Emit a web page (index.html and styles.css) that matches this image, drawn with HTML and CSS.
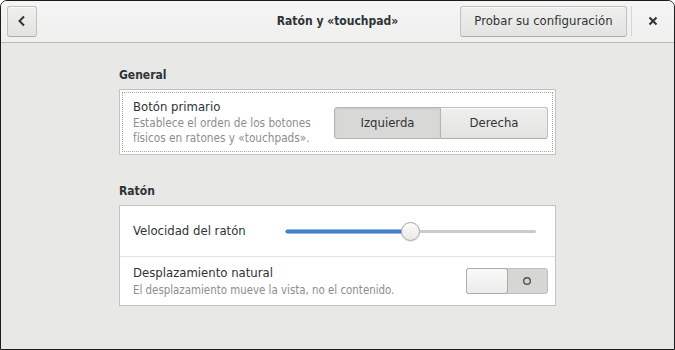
FILE: index.html
```html
<!doctype html>
<html lang="es">
<head>
<meta charset="utf-8" />
<title>Ratón y «touchpad»</title>
<link rel="stylesheet" href="styles.css">
</head>
<body>
  <div class="window">
    <!-- barra de título -->
    <header class="headerbar">
      <div class="hb-start">
        <button class="btn back" aria-label="Atrás">
          <svg width="10" height="12" viewBox="0 0 10 12"><path d="M7 1.5 L2.5 6 L7 10.5" fill="none" stroke="#2e3436" stroke-width="2"/></svg>
        </button>
      </div>
      <div class="title">Ratón y «touchpad»</div>
      <div class="hb-end">
        <button class="btn test">Probar su configuración</button>
        <span class="sep"></span>
        <button class="close" aria-label="Cerrar">
          <svg width="10" height="10" viewBox="0 0 10 10"><path d="M1.5 1.5 L8.5 8.5 M8.5 1.5 L1.5 8.5" stroke="#2e3436" stroke-width="2"/></svg>
        </button>
      </div>
    </header>

    <main class="content">
      <section class="section">
        <h2>General</h2>
        <div class="frame">
          <div class="row focus">
            <div class="info">
              <div class="label">Botón primario</div>
              <div class="desc">Establece el orden de los botones<br>físicos en ratones y «touchpads».</div>
            </div>
            <div class="linked">
              <button class="btn active">Izquierda</button>
              <button class="btn">Derecha</button>
            </div>
          </div>
        </div>
      </section>

      <section class="section">
        <h2>Ratón</h2>
        <div class="frame">
          <div class="row single">
            <div class="info"><div class="label">Velocidad del ratón</div></div>
            <div class="scale">
              <span class="fill"></span>
              <span class="thumb"></span>
              <span class="rest"></span>
            </div>
          </div>
          <div class="row split">
            <div class="info">
              <div class="label">Desplazamiento natural</div>
              <div class="desc">El desplazamiento mueve la vista, no el contenido.</div>
            </div>
            <div class="switch">
              <span class="knob"></span>
              <span class="off">
                <svg width="10" height="10" viewBox="0 0 10 10"><circle cx="5" cy="5" r="3.3" fill="none" stroke="#505354" stroke-width="1.4"/></svg>
              </span>
            </div>
          </div>
        </div>
      </section>
    </main>
  </div>
</body>
</html>
```

FILE: styles.css
```css
:root{
  --fg:#2e3436;
  --dim:#8b8e8f;
  --bg:#e8e8e7;
  --border:#c3c3c0;
  --blue:#4182d0;
}

*{margin:0;padding:0;box-sizing:border-box}
html,body{background:#fff}
body{
  font-family:"DejaVu Sans Condensed","DejaVu Sans",sans-serif;
  font-stretch:condensed;
  font-size:13px;line-height:16px;color:var(--fg);
}
button{font:inherit;color:inherit}

/* === ventana === */
.window{
  width:675px;height:350px;
  border:1px solid #1c1c1c;border-radius:7px 7px 0 0;
  background:var(--bg);overflow:hidden;
  display:flex;flex-direction:column;
}

/* === barra de título === */
.headerbar{
  flex:none;height:42px;
  display:grid;grid-template-columns:1fr auto 1fr;align-items:center;
  background:linear-gradient(#f5f5f5,#efefee);
  border-bottom:1px solid #b8b8b5;
  padding-bottom:1px;
}
.hb-start{display:flex;padding-left:6px}
.hb-end{display:flex;align-items:center;justify-content:flex-end}
.title{font-weight:bold;font-size:12px}

.btn{
  height:31px;padding:0 15px;
  border:1px solid #c1c1be;border-bottom-color:#adadaa;border-radius:3px;
  background:linear-gradient(#efefee,#e3e3e2);
  box-shadow:inset 0 1px rgba(255,255,255,.6);
  display:flex;align-items:center;justify-content:center;
}
.back{width:30px;padding:0}
.test{width:167px;padding:0}
.sep{width:1px;height:30px;background:#d5d5d3;margin-left:4px}
.close{
  width:42px;height:40px;border:0;background:none;
  display:flex;align-items:center;justify-content:center;
}

/* === contenido === */
.content{
  flex:1;padding-top:24px;
  display:flex;flex-direction:column;align-items:center;
}
.section{width:437px}
.section + .section{margin-top:28px}
h2{font-size:12px;line-height:16px;font-weight:bold;margin-bottom:6px}

.frame{background:#fff;border:1px solid var(--border)}
.row{display:flex;align-items:center;padding:0 7px 0 13px}
.row.focus{
  padding-top:9px;padding-bottom:8px;
  outline:1px dotted #a3a5a6;outline-offset:-3px;
}
.row.single{height:50px}
.row.split{height:49px;border-top:1px solid #e2e2e0}
.info{flex:1}
.desc{color:var(--dim);font-size:11.7px;line-height:15px;padding-top:1px}
.split .desc{padding-top:2px;font-size:11.4px}

/* === botones enlazados === */
.linked{display:flex}
.linked .btn{width:107px;height:32px;padding:0}
.linked .btn:first-child{border-radius:3px 0 0 3px}
.linked .btn:last-child{border-radius:0 3px 3px 0;border-left:0}
.linked .btn.active{
  background:#d8d8d7;border-color:#b4b4b1;
  box-shadow:inset 0 1px 2px rgba(0,0,0,.08);
}

/* === deslizador === */
.scale{width:250px;height:20px;margin-right:12px;display:flex;align-items:center}
.fill{width:115px;height:3px;background:var(--blue);border-radius:2px 0 0 2px;box-shadow:0 0 0 .5px #356bb0}
.thumb{
  width:19px;height:19px;border-radius:50%;
  border:1px solid #a6a6a3;
  background:linear-gradient(#fbfbfb,#e9e9e8);
  box-shadow:0 1px 1px rgba(0,0,0,.08);
}
.rest{flex:1;height:3px;background:#cbcbc9;border-radius:0 2px 2px 0}

/* === interruptor === */
.switch{
  width:82px;height:26px;
  border:1px solid #bcbcb9;border-radius:3px;
  background:#d6d6d5;
  display:flex;align-items:stretch;
}
.knob{
  width:42px;margin:-1px 0 -1px -1px;
  border:1px solid #acaca9;border-radius:3px;
  background:linear-gradient(#fafafa,#ebebea);
}
.off{flex:1;display:flex;align-items:center;justify-content:center;padding-right:2px}
.off svg{display:block}
```
